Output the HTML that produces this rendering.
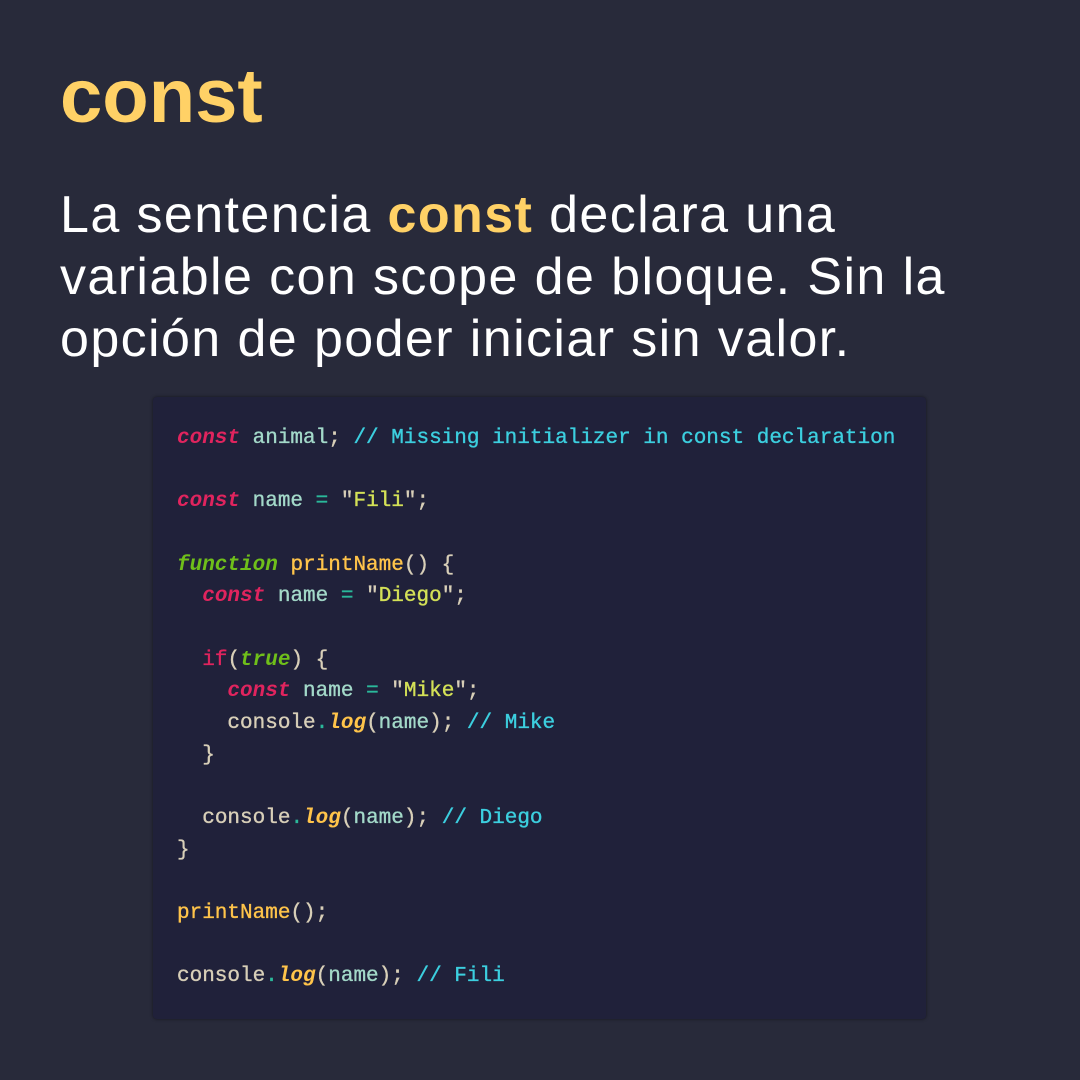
<!DOCTYPE html>
<html><head><meta charset="utf-8"><style>
html,body{margin:0;padding:0}
body{width:1080px;height:1080px;background:#282a3a;position:relative;overflow:hidden;font-family:"Liberation Sans",sans-serif}
.t{position:absolute;left:60px;top:52px;font-size:76px;font-weight:bold;color:#ffd166;line-height:90px;letter-spacing:0px}
.p{position:absolute;left:60px;top:184px;font-size:52px;line-height:62px;color:#fff;letter-spacing:1.4px;margin:0;white-space:nowrap}
.p b{color:#ffd166}
.code{position:absolute;left:153px;top:397px;width:773px;height:622px;background:#20213a;border-radius:4px;box-shadow:0 0 3px rgba(0,0,0,.5);box-sizing:border-box;padding:26px 0 0 24px}
pre{margin:0;font-family:"Liberation Mono",monospace;font-size:21px;line-height:31.65px;color:#a3d9c9;-webkit-text-stroke:0.35px}
.k{color:#e0245e;font-style:italic;font-weight:bold;-webkit-text-stroke:0}
.c{color:#3ccfdf}
.s{color:#d4e157}
.g{color:#6fbf1a;font-style:italic;font-weight:bold;-webkit-text-stroke:0}
.y{color:#ffc44a}
.yi{color:#ffc44a;font-style:italic;font-weight:bold;-webkit-text-stroke:0}
.w{color:#d8cfb8}
.op{color:#2bb89a}
.r{color:#e0245e}
</style></head><body>
<div class="t">const</div>
<p class="p">La sentencia <b>const</b> declara una<br>variable con scope de bloque. Sin la<br>opción de poder iniciar sin valor.</p>
<div class="code"><pre><span class="k">const</span> animal<span class="w">;</span> <span class="c">// Missing initializer in const declaration</span>

<span class="k">const</span> name <span class="op">=</span> <span class="w">"</span><span class="s">Fili</span><span class="w">";</span>

<span class="g">function</span> <span class="y">printName</span><span class="w">() {</span>
  <span class="k">const</span> name <span class="op">=</span> <span class="w">"</span><span class="s">Diego</span><span class="w">";</span>

  <span class="r">if</span><span class="w">(</span><span class="g">true</span><span class="w">) {</span>
    <span class="k">const</span> name <span class="op">=</span> <span class="w">"</span><span class="s">Mike</span><span class="w">";</span>
    <span class="w">console</span><span class="op">.</span><span class="yi">log</span><span class="w">(</span>name<span class="w">);</span> <span class="c">// Mike</span>
  <span class="w">}</span>

  <span class="w">console</span><span class="op">.</span><span class="yi">log</span><span class="w">(</span>name<span class="w">);</span> <span class="c">// Diego</span>
<span class="w">}</span>

<span class="y">printName</span><span class="w">();</span>

<span class="w">console</span><span class="op">.</span><span class="yi">log</span><span class="w">(</span>name<span class="w">);</span> <span class="c">// Fili</span></pre></div>
</body></html>
